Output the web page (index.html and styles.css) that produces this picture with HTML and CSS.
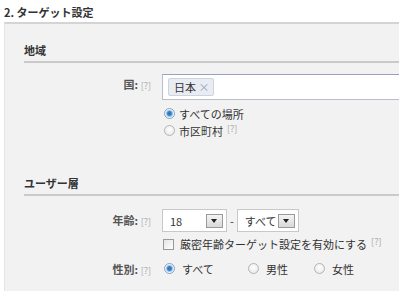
FILE: index.html
```html
<!DOCTYPE html>
<html lang="ja">
	<head>
		<meta charset="UTF-8" />
		<title>ターゲット設定</title>
		<link rel="stylesheet" href="styles.css">
	</head>
	<body>
		<div class="title">2. ターゲット設定</div>
		<div class="panel">
			<!-- 地域 -->
			<div class="section first">
				<div class="head">地域</div>
				<div class="row country">
					<div class="label">国: <span class="help">[?]</span></div>
					<div class="field">
						<div class="tokens">
							<span class="token">日本 <span class="x">×</span></span>
						</div>
						<div class="choices">
							<label class="choice"><span class="radio on"></span>すべての場所</label>
							<label class="choice"><span class="radio"></span>市区町村<span class="help after">[?]</span></label>
						</div>
					</div>
				</div>
			</div>
			<!-- ユーザー層 -->
			<div class="section">
				<div class="head">ユーザー層</div>
				<div class="row age">
					<div class="label">年齢: <span class="help">[?]</span></div>
					<div class="field">
						<div class="selects">
							<div class="select w1"><span class="val">18</span><span class="btn"></span></div>
							<span class="dash">-</span>
							<div class="select w2"><span class="val">すべて</span><span class="btn"></span></div>
						</div>
						<label class="check"><span class="box"></span>厳密年齢ターゲット設定を有効にする<span class="help after">[?]</span></label>
					</div>
				</div>
				<div class="row gender">
					<div class="label">性別: <span class="help">[?]</span></div>
					<div class="field inline">
						<label class="choice g"><span class="radio on"></span>すべて</label>
						<label class="choice g"><span class="radio"></span>男性</label>
						<label class="choice g"><span class="radio"></span>女性</label>
					</div>
				</div>
			</div>
		</div>
	</body>
</html>
```

FILE: styles.css
```css
body {
	margin: 0;
	background-color: #fff;
	color: #333;
	font-family: "Noto Sans CJK JP", "DejaVu Sans", sans-serif;
	font-size: 11px;
	line-height: 16px;
}

.title {
	font-weight: bold;
	padding: 4px 0 2px 4px;
	height: 16px;
}

.panel {
	margin-left: 4px;
	border-top: 2px solid #d4d4d4;
	border-left: 1px solid #e6e6e6;
	background-color: #f2f2f2;
	padding-left: 19px;
	height: 267px;
	overflow: hidden;
}

.section {
	padding-top: 36px;
}

.section.first {
	padding-top: 18px;
}

.head {
	font-weight: bold;
	padding-bottom: 3px;
	border-bottom: 2px solid #cacaca;
}

.row {
	display: flex;
	flex-direction: row;
}

.label {
	width: 127px;
	text-align: right;
	color: #555;
	font-weight: bold;
	padding-top: 2px;
	margin-right: 11px;
}

.help {
	color: #aaa;
	font-weight: normal;
	font-size: 9px;
}

.help.after {
	margin-left: 4px;
	margin-top: -4px;
}

.field {
	flex: 1;
}

/* 国 */
.country {
	margin-top: 11px;
}

.tokens {
	background-color: #fff;
	border: 1px solid #b9bccb;
	border-top-color: #9aa0bd;
	border-right: none;
	padding: 3px 0 0 5px;
	box-sizing: border-box;
	height: 26px;
}

.token {
	display: inline-block;
	height: 16px;
	line-height: 16px;
	padding: 0 4px 0 5px;
	background-color: #e9edf3;
	border: 1px solid #cdd4df;
	border-radius: 2px;
	color: #333;
}

.token .x {
	color: #9aa4b4;
	font-size: 11px;
}

.choices {
	margin-top: 5px;
}

.choice {
	display: flex;
	align-items: center;
	height: 17px;
	color: #333;
	white-space: nowrap;
}

.radio {
	display: inline-block;
	box-sizing: border-box;
	width: 11px;
	height: 11px;
	margin: 0 4px 0 2px;
	border-radius: 50%;
	border: 1px solid #b4b4b4;
	background: radial-gradient(circle at 50% 40%, #fff 0, #e4e4e4 100%);
}

.radio.on {
	border-color: #8aa3bd;
	background: radial-gradient(circle, #2c6fb0 0, #3b86cc 2px, #9cc2e6 3px, #eef4fa 4px);
}

/* 年齢 */
.age {
	margin-top: 13px;
}

.age .label {
	padding-top: 3px;
}

.selects {
	display: flex;
	align-items: center;
	height: 23px;
}

.select {
	display: flex;
	align-items: center;
	justify-content: space-between;
	box-sizing: border-box;
	height: 23px;
	background-color: #fff;
	border: 1px solid #c8c8c8;
	padding: 0 3px 0 7px;
	white-space: nowrap;
}

.select.w1 {
	width: 65px;
}

.select.w2 {
	width: 62px;
	padding-left: 7px;
}

.btn {
	position: relative;
	box-sizing: border-box;
	width: 17px;
	height: 14px;
	background: linear-gradient(#f4f4f4, #d9d9d9);
	border: 1px solid #9a9a9a;
}

.btn::after {
	content: "";
	position: absolute;
	left: 4px;
	top: 4px;
	border-left: 3px solid transparent;
	border-right: 3px solid transparent;
	border-top: 4px solid #222;
}

.dash {
	margin: 0 3px 0 3px;
}

.check {
	display: flex;
	align-items: center;
	height: 18px;
	margin-top: 3px;
	white-space: nowrap;
}

.box {
	display: inline-block;
	box-sizing: border-box;
	width: 11px;
	height: 11px;
	margin: 0 6px 0 1px;
	border: 1px solid #999;
	background: linear-gradient(135deg, #e4e4e4, #fff);
}

/* 性別 */
.gender {
	margin-top: 7px;
}

.gender .label {
	padding-top: 1px;
}

.inline {
	display: flex;
	flex-direction: row;
}

.choice.g {
	width: 84px;
}

.choice.g .radio {
	margin-right: 7px;
}

.choice.g:nth-child(2) {
	width: 66px;
}
```
